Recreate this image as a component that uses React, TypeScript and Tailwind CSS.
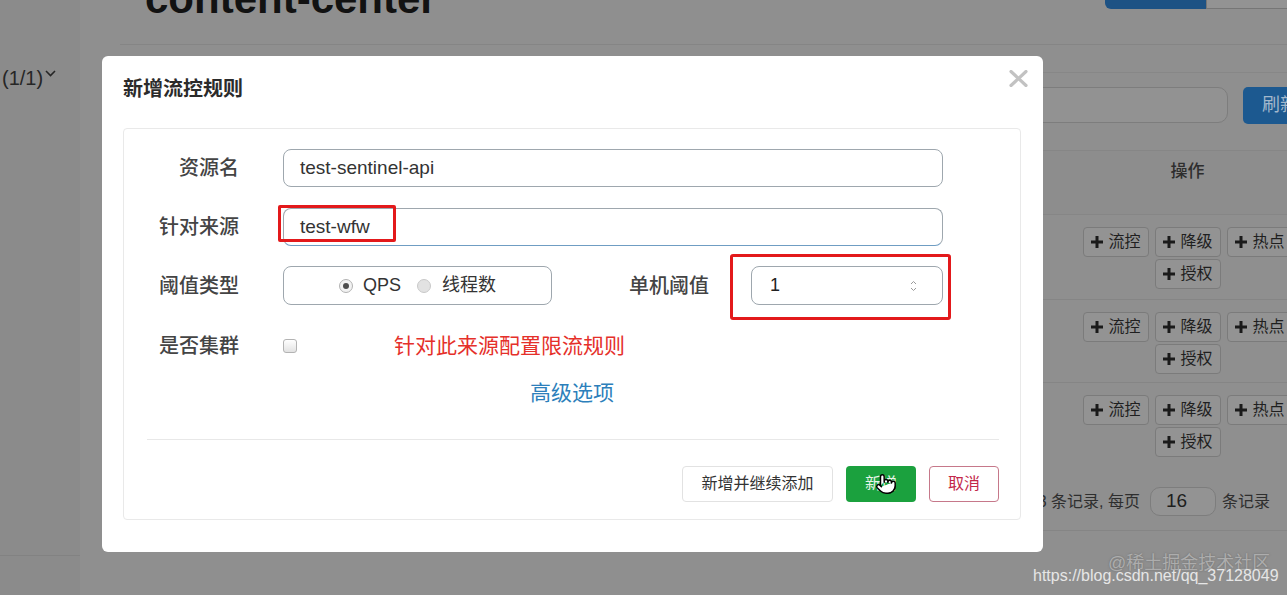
import { Pointer } from 'lucide-react';

function PlusMark() {
    return (
        <svg width="12" height="12" viewBox="0 0 12 12" className="shrink-0">
            <rect x="4.5" y="0" width="3" height="12" fill="#1a1a1a" />
            <rect x="0" y="4.5" width="12" height="3" fill="#1a1a1a" />
        </svg>
    );
}

function OpButton({ label }: { label: string }) {
    return (
        <div className="flex h-[30px] w-[66px] items-center gap-[6px] whitespace-nowrap rounded-[4px] border border-[#7b7b7b] bg-[#939393] pl-[7px] text-[16px] leading-none text-[#1f1f1f]">
            <PlusMark />
            <span>{label}</span>
        </div>
    );
}

function TableRow({ height, last }: { height: string; last?: boolean }) {
    return (
        <div className={`flex ${height} ${last ? '' : 'border-b border-[#858585]'}`}>
            <div className="flex-1" />
            <div className="flex w-[225px] flex-wrap content-start justify-center gap-x-[6px] gap-y-[2px] pt-[12px]">
                <OpButton label="流控" />
                <OpButton label="降级" />
                <OpButton label="热点" />
                <OpButton label="授权" />
            </div>
        </div>
    );
}

function Background() {
    return (
        <div className="flex h-full">
            {/* Sidebar */}
            <aside className="flex w-[80px] shrink-0 flex-col bg-[#8b8b8b]">
                <div className="mt-[64px] flex items-start pl-[2px] text-[20px] leading-[28px] text-[#262626]">
                    <span>(1/1)</span>
                    <svg width="11" height="7" viewBox="0 0 11 7" className="ml-[2px] mt-[6px]">
                        <path d="M1 1 L5.5 5.5 L10 1" fill="none" stroke="#262626" strokeWidth="1.6" />
                    </svg>
                </div>
                <div className="mb-[39px] mt-auto h-px bg-[#828282]" />
            </aside>

            {/* Main */}
            <main className="ml-[40px] flex w-[1180px] shrink-0 flex-col">
                <div className="flex h-[45px] items-start justify-between border-b border-[#858585]">
                    <h1 className="ml-[25px] mt-[-22px] text-[42px] font-bold leading-[42px] text-[#121212]">
                        content-center
                    </h1>
                    <div className="flex">
                        <div className="mt-[-30px] h-[39px] w-[101px] rounded-bl-[6px] bg-[#1d5284]" />
                        <div className="mt-[-30px] h-[39px] w-[94px] border-b border-l border-[#767676] bg-[#939393]" />
                    </div>
                </div>
                <div className="h-[28px] border-b border-[#878787]" />

                {/* Toolbar */}
                <div className="mt-[14px] flex h-[37px] justify-end">
                    <div className="h-[36px] w-[320px] rounded-[10px] border border-[#7d7d7d] bg-[#929292]" />
                    <div className="ml-[15px] flex h-[37px] w-[57px] items-center whitespace-nowrap rounded-l-[5px] bg-[#1c5990] pl-[19px] text-[18px] text-[#a3b8cc]">
                        刷新
                    </div>
                </div>

                {/* Table */}
                <div className="mt-[26px] flex h-[65px] items-start border-y border-[#868686] bg-[#8d8d8d] pt-[9px]">
                    <div className="flex-1" />
                    <div className="w-[225px] text-center text-[17px] font-medium leading-[24px] text-[#2e2e2e]">操作</div>
                </div>
                <TableRow height="h-[85px]" />
                <TableRow height="h-[83px]" />
                <TableRow height="h-[84px]" last />

                {/* Pagination */}
                <div className="mt-[20px] flex h-[29px] items-center justify-end pr-[30px] text-[16px] text-[#2e2e2e]">
                    <span>共 3 条记录, 每页</span>
                    <div className="ml-[10px] flex h-[29px] w-[66px] items-center rounded-[10px] border border-[#7d7d7d] bg-[#939393] pl-[15px] text-[19px] text-[#1e1e1e]">
                        16
                    </div>
                    <span className="ml-[6px]">条记录</span>
                </div>
                <div className="mt-[14px] border-b border-[#858585]" />
            </main>
        </div>
    );
}

function Radio({ checked }: { checked?: boolean }) {
    return checked ? (
        <span className="flex h-[14px] w-[14px] items-center justify-center rounded-full border border-[#b3b3b3] bg-[#f2f2f2]">
            <span className="h-[6px] w-[6px] rounded-full bg-[#4d4d4d]" />
        </span>
    ) : (
        <span className="h-[14px] w-[14px] rounded-full border border-[#c9c9c9] bg-[#e2e2e2]" />
    );
}

function Label({ children, width = 'w-[115px]' }: { children: string; width?: string }) {
    return (
        <div className={`${width} shrink-0 text-right text-[20px] font-medium leading-none text-[#444]`}>{children}</div>
    );
}

function Modal() {
    return (
        <div className="absolute left-[102px] top-[56px] flex h-[496px] w-[941px] flex-col rounded-[6px] bg-white">
            {/* Header */}
            <div className="flex h-[72px] items-start justify-between pl-[21px] pr-[15px] pt-[19px]">
                <h2 className="text-[20px] font-bold leading-[28px] text-[#2b2b2b]">新增流控规则</h2>
                <svg width="19" height="17" viewBox="0 0 19 17" className="mt-[-5px]">
                    <path d="M2 1.5 L17 15.5 M17 1.5 L2 15.5" stroke="#c2c2c2" strokeWidth="3.2" strokeLinecap="round" />
                </svg>
            </div>

            {/* Form panel */}
            <div className="ml-[21px] mr-[22px] flex h-[392px] flex-col rounded-[4px] border border-[#e9e9e9] pt-[20px]">
                <div className="flex h-[38px] items-center">
                    <Label>资源名</Label>
                    <div className="ml-[44px] flex h-[38px] w-[660px] items-center rounded-[8px] border border-[#9ea7ae] px-[16px] text-[19px] text-[#333]">
                        test-sentinel-api
                    </div>
                </div>

                <div className="mt-[21px] flex h-[38px] items-center">
                    <Label>针对来源</Label>
                    <div className="relative ml-[44px] flex h-[38px] w-[660px] items-center rounded-[8px] border border-[#9ea7ae] border-b-[#6f9dc3] px-[16px] text-[19px] text-[#333]">
                        test-wfw
                        <div className="absolute left-[-6px] top-[-4px] h-[37px] w-[118px] rounded-[2px] border-[3px] border-[#e3191b]" />
                    </div>
                </div>

                <div className="mt-[20px] flex h-[39px] items-center">
                    <Label>阈值类型</Label>
                    <div className="ml-[44px] flex h-[39px] w-[269px] items-center justify-center rounded-[8px] border border-[#9ea7ae] text-[18px] text-[#333]">
                        <Radio checked />
                        <span className="ml-[10px]">QPS</span>
                        <span className="ml-[16px] flex">
                            <Radio />
                        </span>
                        <span className="ml-[11px]">线程数</span>
                    </div>
                    <Label width="w-[157px]">单机阈值</Label>
                    <div className="relative ml-[42px] flex h-[39px] w-[192px] items-center justify-between rounded-[8px] border border-[#9ea7ae] pl-[18px] pr-[25px] text-[18px] text-[#222]">
                        <span>1</span>
                        <svg width="7" height="12" viewBox="0 0 7 12">
                            <path d="M1 4 L3.5 1.5 L6 4 M1 8 L3.5 10.5 L6 8" fill="none" stroke="#9a9a9a" strokeWidth="1" />
                        </svg>
                        <div className="absolute left-[-22px] top-[-13px] h-[66px] w-[221px] rounded-[3px] border-[3px] border-[#e3191b]" />
                    </div>
                </div>

                <div className="mt-[22px] flex h-[38px] items-center">
                    <Label>是否集群</Label>
                    <span className="ml-[44px] h-[14px] w-[14px] rounded-[3px] border border-[#b3b3b3] bg-gradient-to-b from-white to-[#e2e2e2]" />
                    <span className="ml-[97px] text-[21px] text-[#e5302a]">针对此来源配置限流规则</span>
                </div>

                <div className="mt-[14px] text-center text-[21px] leading-[28px] text-[#2d7fbb]">高级选项</div>

                <div className="ml-[23px] mr-[21px] mt-[32px] h-px bg-[#e8e8e8]" />

                <div className="mt-[26px] flex justify-end gap-[13px] pr-[21px]">
                    <div className="flex h-[36px] w-[151px] items-center justify-center rounded-[4px] border border-[#e2e2e2] text-[16px] text-[#333]">
                        新增并继续添加
                    </div>
                    <div className="relative flex h-[36px] w-[70px] items-center justify-center rounded-[4px] bg-[#1ba13e] text-[16px] text-[#e8f5ea]">
                        新增
                        <Pointer
                            size={22}
                            fill="white"
                            color="black"
                            strokeWidth={1.6}
                            className="absolute left-[29px] top-[7px]"
                        />
                    </div>
                    <div className="flex h-[36px] w-[70px] items-center justify-center rounded-[4px] border border-[#c6788a] text-[16px] text-[#c3274a]">
                        取消
                    </div>
                </div>
            </div>
        </div>
    );
}

export default function App() {
    return (
        <div className="relative h-[595px] w-[1287px] overflow-hidden bg-[#8f8f8f] font-['Liberation_Sans','Noto_Sans_CJK_SC',sans-serif]">
            <Background />
            <Modal />

            {/* Watermark */}
            <div className="absolute left-[1108px] top-[550px] text-[18px] leading-[26px] text-[#adadad] [text-shadow:0_0_2px_#6a6a6a]">
                @稀土掘金技术社区
            </div>
            <div className="absolute left-[1033px] top-[565px] text-[16px] leading-[22px] text-[#e6e6e6]">
                https://blog.csdn.net/qq_37128049
            </div>
        </div>
    );
}
